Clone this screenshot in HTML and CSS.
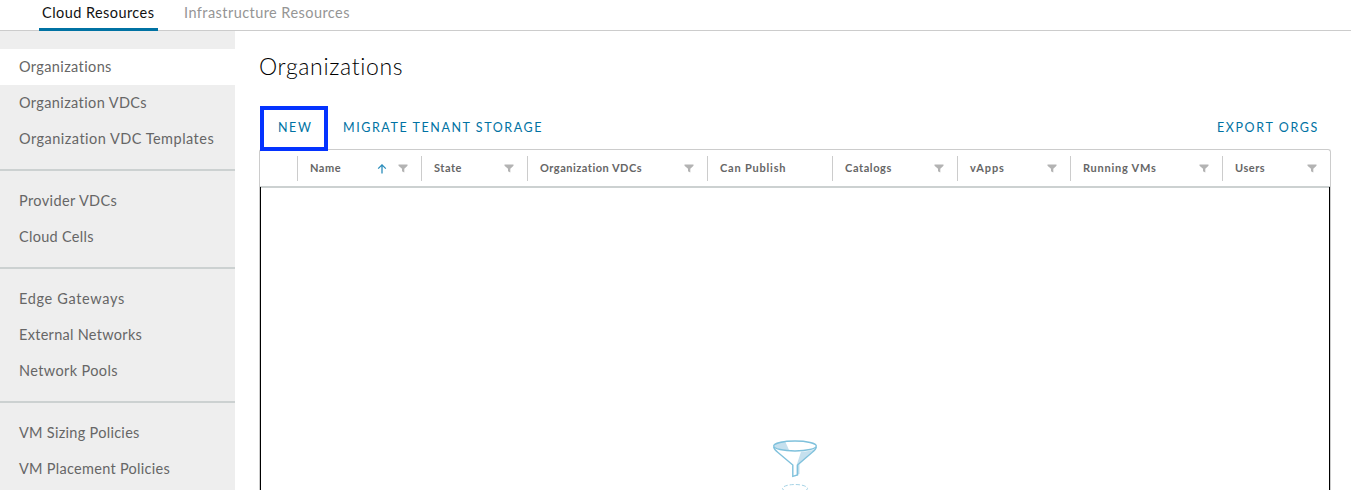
FILE: index.html
```
<!DOCTYPE html>
<html lang="en">
<head>
<meta charset="utf-8">
<title>Organizations</title>
<link rel="stylesheet" href="styles.css">
</head>
<body>
<svg width="0" height="0" class="defs">
  <symbol id="filter" viewBox="0 0 10 9"><path d="M0.5 0.5h9v1.2L6.3 4.8V8.5L4 7.3V4.8L0.5 1.7z" fill="#b3b3b3"/></symbol>
</svg>
<nav class="tabs">
  <a class="tab active">Cloud Resources</a>
  <a class="tab">Infrastructure Resources</a>
</nav>
<div class="layout">
  <aside class="sidebar">
    <ul class="group">
      <li class="item selected">Organizations</li>
      <li class="item">Organization VDCs</li>
      <li class="item wide">Organization VDC Templates</li>
    </ul>
    <ul class="group">
      <li class="item">Provider VDCs</li>
      <li class="item tight">Cloud Cells</li>
    </ul>
    <ul class="group">
      <li class="item wider">Edge Gateways</li>
      <li class="item tight">External Networks</li>
      <li class="item">Network Pools</li>
    </ul>
    <ul class="group">
      <li class="item tight">VM Sizing Policies</li>
      <li class="item tight">VM Placement Policies</li>
    </ul>
  </aside>
  <main class="content">
    <h1 class="title">Organizations</h1>
    <div class="actions">
      <button class="action new">NEW</button>
      <button class="action">MIGRATE TENANT STORAGE</button>
      <button class="action export">EXPORT ORGS</button>
    </div>
    <section class="grid">
      <header class="head">
        <div class="col blank"></div>
        <div class="col name"><span class="label">Name</span>
          <svg class="sort" width="10" height="10" viewBox="0 0 10 10"><path d="M5 9.5V1M1.2 4.6L5 0.9l3.8 3.7" fill="none" stroke="#2a8dbb" stroke-width="1.3"/></svg>
          <svg class="filter"><use href="#filter"/></svg></div>
        <div class="col state"><span class="label">State</span><svg class="filter"><use href="#filter"/></svg></div>
        <div class="col vdcs"><span class="label">Organization VDCs</span><svg class="filter"><use href="#filter"/></svg></div>
        <div class="col publish"><span class="label">Can Publish</span></div>
        <div class="col catalogs"><span class="label">Catalogs</span><svg class="filter"><use href="#filter"/></svg></div>
        <div class="col vapps"><span class="label">vApps</span><svg class="filter"><use href="#filter"/></svg></div>
        <div class="col running"><span class="label">Running VMs</span><svg class="filter"><use href="#filter"/></svg></div>
        <div class="col users"><span class="label">Users</span><svg class="filter"><use href="#filter"/></svg></div>
      </header>
      <div class="body">
        <svg class="funnel" width="46" height="60" viewBox="0 0 46 60">
          <path d="M2 6C3 3 8 1.500 13 1L17 10C9 10 3 8.500 2 6z" fill="#c5e0ee"/>
          <path d="M42.500 9C39 11 35 11.500 29 11.800L24.500 25.500V35L27.500 34V24z" fill="#c5e0ee"/>
          <g fill="none" stroke="#7fc1dc" stroke-width="1.400">
            <ellipse cx="23" cy="6" rx="21.300" ry="5"/>
            <path d="M1.700 7C2 9 4 11 6 12.500L20.800 25V36.300L25.500 35V25L40 12.500C42 11 44 9 44.300 7"/>
            <ellipse cx="23" cy="48.500" rx="12.500" ry="4" stroke="#a5d3e6" stroke-width="1" stroke-dasharray="4 2"/>
          </g>
        </svg>
      </div>
    </section>
  </main>
</div>
</body>
</html>
```
FILE: styles.css
```
* { box-sizing: border-box; }
body { margin: 0; height: 490px; overflow: hidden; background: #fff; font-family: Lato, "Open Sans", sans-serif; color: #666; }
.defs { display: block; }
.tabs { display: flex; gap: 23px; height: 31px; padding-left: 39px; border-bottom: 1px solid #ccc; font-size: 14.5px; letter-spacing: .44px; }
.tab { height: 31px; padding: 0 3px; line-height: 25px; color: #959595; white-space: nowrap; }
.tab.active { width: 119px; color: #111; border-bottom: 3px solid #0072a3; }
.layout { display: flex; height: 459px; }
.sidebar { width: 235px; flex: none; padding-top: 18px; background: #eee; overflow: hidden; }
.group { list-style: none; margin: 0; padding: 0 0 12px; }
.group + .group { border-top: 2px solid #ccd1d1; padding-top: 12px; }
.item { height: 36px; line-height: 35px; padding-left: 19px; font-size: 14.5px; letter-spacing: .38px; white-space: nowrap; }
.item.wide { letter-spacing: .48px; }
.item.wider { letter-spacing: .66px; }
.item.tight { letter-spacing: .29px; }
.item.selected { background: #fff; }
.content { flex: 1; padding: 18px 20px 0 24px; display: flex; flex-direction: column; }
.title { margin: 0; height: 57px; flex: none; line-height: 35px; font-size: 23px; font-weight: 300; color: #000; letter-spacing: .65px; }
.actions { display: flex; align-items: center; height: 45px; flex: none; margin: 0 0 -2px 1px; position: relative; z-index: 1; }
.action { border: 0; background: none; padding: 0 0 3px; font: 400 12.5px Lato, sans-serif; letter-spacing: 1.56px; color: #0072a3; white-space: nowrap; height: 45px; }
.action.new { width: 68px; border: 4px solid #0433ff; margin-right: 15px; text-align: left; padding-left: 14px; }
.action.export { margin-left: auto; margin-right: 12px; letter-spacing: 1.62px; }
.grid { flex: 1; display: flex; flex-direction: column; border: 1px solid #ccc; border-bottom: 0; border-radius: 3px 3px 0 0; }
.head { display: flex; height: 38px; padding-top: 6px; border-bottom: 2px solid #ccd1d1; flex: none; }
.col { display: flex; align-items: center; height: 25px; padding: 0 13px 0 12px; border-left: 1px solid #ccc; font-size: 11px; font-weight: 700; white-space: nowrap; letter-spacing: .5px; }
.label { padding-bottom: 2px; }
.blank { width: 37px; border: 0; }
.name { width: 124px; }
.state { width: 106px; }
.vdcs { width: 180px; }
.publish { width: 125px; letter-spacing: .8px; }
.catalogs { width: 125px; letter-spacing: .6px; }
.vapps { width: 113px; letter-spacing: .9px; }
.running { width: 152px; letter-spacing: .75px; }
.users { flex: 1; }
.filter { width: 10px; height: 9px; margin-left: auto; }
.sort { margin-left: auto; margin-right: 11px; }
.sort + .filter { margin-left: 0; }
.body { flex: 1; display: flex; justify-content: center; padding-top: 253px; border: solid #000; border-width: 0 1px; margin-top: -1px; }
.funnel { flex: none; }
```
